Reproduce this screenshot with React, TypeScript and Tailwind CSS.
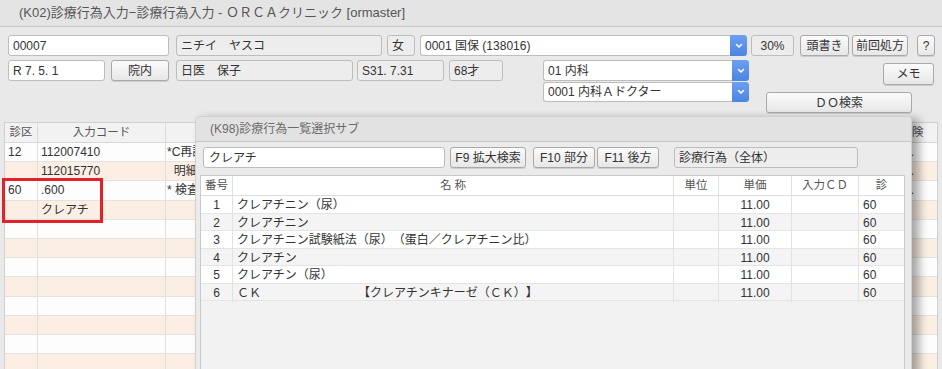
import React from "react";

const FONT = "font-['Liberation_Sans','Noto_Sans_CJK_JP',sans-serif] [text-spacing-trim:space-all]";

function Field({ w, white, children, className = "", center }: { w: string; white?: boolean; children?: React.ReactNode; className?: string; center?: boolean }) {
  return (
    <div
      className={`${w} h-[21px] shrink-0 border border-[#bdbdbd] rounded-[3px] flex items-center text-[12px] text-[#333] whitespace-nowrap overflow-hidden ${
        center ? "justify-center" : "pl-[4px]"
      } ${white ? "bg-white" : "bg-[#ededed]"} ${className}`}
    >
      {children}
    </div>
  );
}

function Btn({ w, children, className = "" }: { w: string; children?: React.ReactNode; className?: string }) {
  return (
    <div
      className={`${w} h-[21px] shrink-0 border border-[#a9a9a9] rounded-[3px] flex items-center justify-center text-[12px] text-[#333] whitespace-nowrap bg-gradient-to-b from-[#fbfbfb] to-[#e7e7e7] shadow-[0_1px_0_rgba(0,0,0,0.12)] ${className}`}
    >
      {children}
    </div>
  );
}

function Chevron() {
  return (
    <svg width="10" height="10" viewBox="0 0 10 10">
      <polyline points="2.5,3.5 5,6 7.5,3.5" fill="none" stroke="white" strokeWidth="1.6" strokeLinecap="round" strokeLinejoin="round" />
    </svg>
  );
}

function Combo({ w, h = "h-[21px]", children, className = "" }: { w: string; h?: string; children?: React.ReactNode; className?: string }) {
  return (
    <div className={`${w} ${h} shrink-0 flex ${className}`}>
      <div className="flex-1 bg-white border border-[#bdbdbd] border-r-0 rounded-l-[3px] flex items-center pl-[4px] text-[12px] text-[#333] whitespace-nowrap overflow-hidden">
        {children}
      </div>
      <div className="w-[17px] rounded-r-[3px] bg-gradient-to-b from-[#6c9ff0] to-[#4b86e2] flex items-center justify-center">
        <Chevron />
      </div>
    </div>
  );
}

const mainRows: [string, string, string, string][] = [
  ["12", "112007410", "*C再診料", "1."],
  ["", "112015770", "  明細書発行体制等加算", "1."],
  ["60", ".600", "* 検査", "1."],
  ["", "クレアチ", "", ""],
  ["", "", "", ""],
  ["", "", "", ""],
  ["", "", "", ""],
  ["", "", "", ""],
  ["", "", "", ""],
  ["", "", "", ""],
  ["", "", "", ""],
  ["", "", "", ""],
  ["", "", "", ""],
];

const subRows: [string, React.ReactNode][] = [
  ["1", "クレアチニン（尿）"],
  ["2", "クレアチニン"],
  ["3", "クレアチニン試験紙法（尿）（蛋白／クレアチニン比）"],
  ["4", "クレアチン"],
  ["5", "クレアチン（尿）"],
  [
    "6",
    <>
      ＣＫ<span className="ml-[97px]">【クレアチンキナーゼ（ＣＫ）】</span>
    </>,
  ],
];

export default function App() {
  return (
    <div className={`${FONT} relative w-[942px] h-[369px] overflow-hidden bg-[#e9e9e9]`}>
      {/* title bar */}
      <div className="h-[27px] border-b border-[#c6c6c6] bg-[#e4e4e4] pl-[19px] flex items-center text-[13px] text-[#555] whitespace-nowrap">
        (K02)診療行為入力−診療行為入力 - ＯＲＣＡクリニック [ormaster]
      </div>

      {/* header */}
      <div className="px-[8px] pt-[8px]">
        <div className="flex items-start">
          <Field w="w-[161px]" white>00007</Field>
          <Field w="w-[206px]" className="ml-[7px]">ニチイ　ヤスコ</Field>
          <Field w="w-[28px]" className="ml-[5px]">女</Field>
          <Combo w="w-[327px]" className="ml-[5px]">0001 国保 (138016)</Combo>
          <Field w="w-[43px]" center className="ml-[4px]">30%</Field>
          <Btn w="w-[49px]" className="ml-[6px]">頭書き</Btn>
          <Btn w="w-[56px]" className="ml-[3px]">前回処方</Btn>
          <Btn w="w-[18px]" className="ml-[9px]">?</Btn>
        </div>
        <div className="flex items-start mt-[4px]">
          <Field w="w-[97px]" white>R 7. 5. 1</Field>
          <Btn w="w-[58px]" className="ml-[6px]">院内</Btn>
          <Field w="w-[177px]" className="ml-[7px]">日医　保子</Field>
          <Field w="w-[87px]" className="ml-[4px]">S31. 7.31</Field>
          <Field w="w-[54px]" className="ml-[5px]">68才</Field>
          <div className="ml-[40px] flex flex-col w-[206px]">
            <Combo w="w-[206px]">01 内科</Combo>
            <Combo w="w-[206px]" h="h-[20px]" className="mt-[1px]">0001 内科Ａドクター</Combo>
          </div>
          <div className="ml-[17px] w-[169px] flex flex-col">
            <Btn w="w-[51px]" className="self-end mt-[3px] h-[22px]">メモ</Btn>
            <Btn w="w-[146px]" className="mt-[7px]">ＤＯ検索</Btn>
          </div>
        </div>
      </div>

      {/* main table */}
      <div className="mx-[4px] mt-[9px] border border-[#cfcfcf] bg-white">
        <div className="grid grid-cols-[33px_128px_1fr_50px] h-[20px] bg-[#f2f2f2] border-b border-[#d6d6d6] text-[11.5px] text-[#555]">
          <div className="flex items-center justify-center border-r border-[#dadada]">診区</div>
          <div className="flex items-center justify-center border-r border-[#dadada]">入力コード</div>
          <div className="border-r border-[#dadada]"></div>
          <div className="flex items-center justify-center">保険</div>
        </div>
        {mainRows.map((r, i) => (
          <div
            key={i}
            className={`grid grid-cols-[33px_128px_1fr_50px] h-[19.2px] border-b border-[#e2e2e2] text-[12px] text-[#333] ${
              i % 2 === 1 ? "bg-[#fbeee3]" : "bg-[#fdfdfd]"
            }`}
          >
            <div className="flex items-center pl-[3px] border-r border-[#dedede]">{r[0]}</div>
            <div className="flex items-center pl-[3px] border-r border-[#dedede] whitespace-nowrap">{r[1]}</div>
            <div className="flex items-center pl-[1px] border-r border-[#dedede] whitespace-pre overflow-hidden">{r[2]}</div>
            <div className="flex items-center pl-[17px] whitespace-nowrap">{r[3]}</div>
          </div>
        ))}
      </div>

      {/* red highlight */}
      <div className="absolute left-[2px] top-[178px] w-[101px] h-[45px] border-[3px] border-[#e3212b]"></div>

      {/* sub dialog */}
      <div className="absolute left-[195px] top-[116px] w-[717px] h-[270px] bg-[#ebebeb] border border-[#d0d0d0] rounded-t-[4px] shadow-[7px_3px_10px_rgba(0,0,0,0.35)]">
        <div className="h-[25px] bg-[#e2e2e2] border-b border-[#c8c8c8] rounded-t-[4px] pl-[14px] flex items-center text-[12px] text-[#6b6b6b] whitespace-nowrap">
          (K98)診療行為一覧選択サブ
        </div>
        <div className="flex items-start pl-[7px] mt-[5px]">
          <Field w="w-[242px]" white className="pl-[5px]">クレアチ</Field>
          <Btn w="w-[76px]" className="ml-[5px]">F9 拡大検索</Btn>
          <Btn w="w-[62px]" className="ml-[7px]">F10 部分</Btn>
          <Btn w="w-[62px]" className="ml-[2px]">F11 後方</Btn>
          <Field w="w-[184px]" className="ml-[15px]">診療行為（全体）</Field>
        </div>
        <div className="ml-[4px] mt-[7px] w-[705px] h-[200px] border border-[#c9c9c9] bg-[#f2f2f2]">
          <div className="grid grid-cols-[32px_441px_45px_73px_67px_1fr] h-[20px] bg-white border-b border-[#dcdcdc] text-[11.5px] text-[#555]">
            <div className="flex items-center justify-center border-r border-[#e0e0e0]">番号</div>
            <div className="flex items-center justify-center border-r border-[#e0e0e0]">名 称</div>
            <div className="flex items-center justify-center border-r border-[#e0e0e0]">単位</div>
            <div className="flex items-center justify-center border-r border-[#e0e0e0]">単価</div>
            <div className="flex items-center justify-center border-r border-[#e0e0e0]">入力ＣＤ</div>
            <div className="flex items-center justify-center">診</div>
          </div>
          {subRows.map((r, i) => (
            <div
              key={i}
              className={`grid grid-cols-[32px_441px_45px_73px_67px_1fr] h-[17.5px] border-b border-[#e4e4e4] text-[12px] text-[#333] ${
                i % 2 === 1 ? "bg-[#f4f4f4]" : "bg-white"
              }`}
            >
              <div className="flex items-center justify-center border-r border-[#e2e2e2]">{r[0]}</div>
              <div className="flex items-center pl-[4px] border-r border-[#e2e2e2] whitespace-nowrap">{r[1]}</div>
              <div className="border-r border-[#e2e2e2]"></div>
              <div className="flex items-center justify-center border-r border-[#e2e2e2]">11.00</div>
              <div className="border-r border-[#e2e2e2]"></div>
              <div className="flex items-center pl-[4px]">60</div>
            </div>
          ))}
        </div>
      </div>
    </div>
  );
}
